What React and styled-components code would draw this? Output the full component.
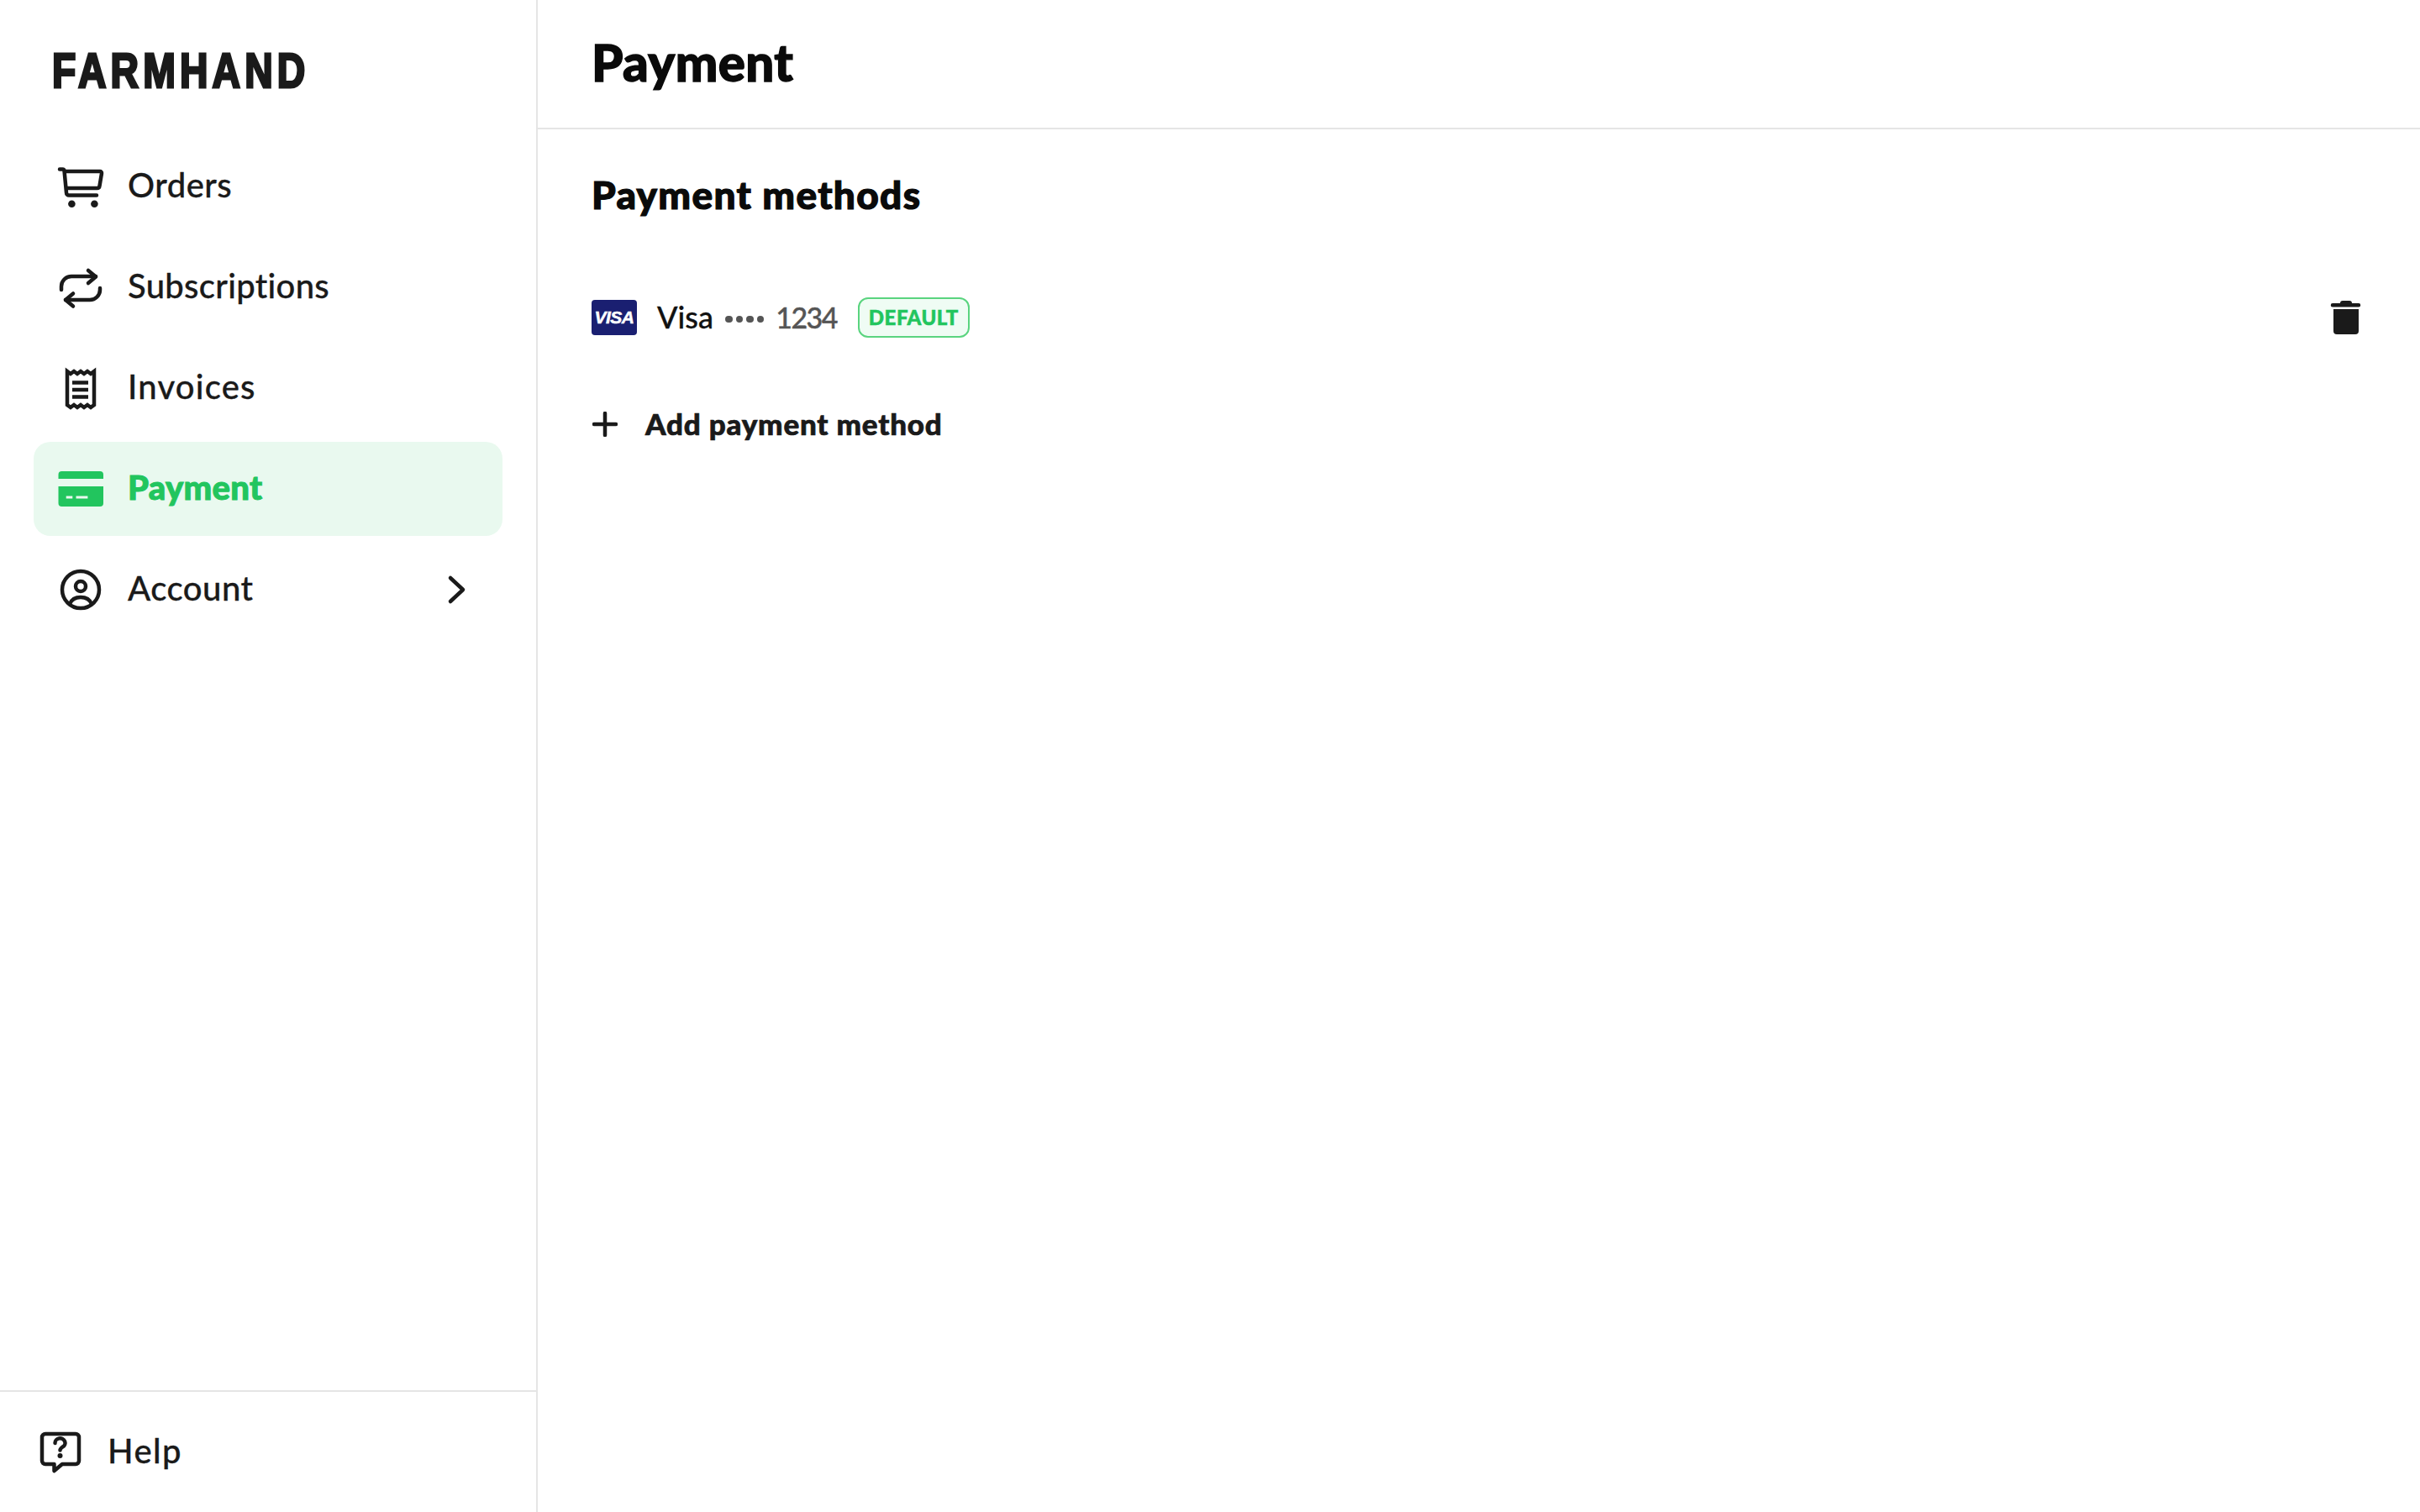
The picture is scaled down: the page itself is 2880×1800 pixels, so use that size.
import React from 'react';
import styled, { createGlobalStyle } from 'styled-components';

const GlobalStyle = createGlobalStyle`
  html, body {
    margin: 0;
    padding: 0;
    background: #fff;
  }
  body {
    font-family: Lato, "Open Sans", sans-serif;
    color: #1a1a1a;
  }
`;

const Layout = styled.div`
  display: grid;
  grid-template-columns: 640px 1fr;
  height: 1800px;
`;

const Sidebar = styled.aside`
  display: flex;
  flex-direction: column;
  border-right: 2px solid #e5e5e5;
  box-sizing: border-box;
`;

const LogoBar = styled.div`
  height: 166px;
  box-sizing: border-box;
  padding: 51px 0 0 62px;
`;

const Logo = styled.div`
  width: max-content;
  font-family: "Liberation Sans", sans-serif;
  font-weight: 700;
  font-size: 58px;
  line-height: 66px;
  letter-spacing: 6.4px;
  color: #1a1a1a;
  -webkit-text-stroke: 3px #1a1a1a;
  transform: scaleX(0.8);
  transform-origin: left center;
`;

const Nav = styled.nav`
  display: flex;
  flex-direction: column;
  gap: 8px;
  padding: 0 40px;
  flex: 1;
`;

const NavItem = styled.a`
  display: flex;
  align-items: center;
  height: 112px;
  padding: 0 28px;
  gap: 28px;
  border-radius: 20px;
  font-size: 40px;
  font-weight: ${(p) => (p.$active ? 900 : 500)};
  color: ${(p) => (p.$active ? '#22c55e' : '#1a1a1a')};
  background: ${(p) => (p.$active ? '#e9f9ef' : 'transparent')};
  -webkit-text-stroke: ${(p) => (p.$active ? '1px' : '0.3px')} currentColor;
`;

const NavLabel = styled.span`
  padding-bottom: 5px;
  letter-spacing: ${(p) => p.$track}px;
`;

const IconBox = styled.svg`
  width: 56px;
  height: 56px;
  flex: none;
  fill: none;
  stroke: currentColor;
  stroke-width: 4.5;
  stroke-linecap: round;
  stroke-linejoin: round;
`;

const Grow = styled.span`
  flex: 1;
`;

const Chevron = styled.svg`
  width: 24px;
  height: 36px;
  margin-right: 14px;
  fill: none;
  stroke: #1a1a1a;
  stroke-width: 4.5;
  stroke-linecap: round;
  stroke-linejoin: round;
`;

const HelpBar = styled.a`
  display: flex;
  align-items: center;
  gap: 28px;
  height: 145px;
  box-sizing: border-box;
  border-top: 2px solid #e5e5e5;
  padding-left: 44px;
  font-size: 40px;
  font-weight: 500;
  color: #1a1a1a;
  -webkit-text-stroke: 0.3px currentColor;
`;

const HelpLabel = styled.span`
  padding-bottom: 3px;
  letter-spacing: 1.4px;
`;

const Main = styled.main`
  display: flex;
  flex-direction: column;
`;

const Header = styled.header`
  height: 154px;
  box-sizing: border-box;
  border-bottom: 2px solid #e5e5e5;
  padding: 38px 64px 0;
`;

const Title = styled.h1`
  margin: 0;
  font-size: 60px;
  line-height: 72px;
  font-weight: 900;
  letter-spacing: 0.4px;
  color: #0a0a0a;
  -webkit-text-stroke: 1.4px #0a0a0a;
`;

const Section = styled.section`
  padding: 50px 0 0 64px;
`;

const SectionTitle = styled.h2`
  margin: 0;
  font-size: 46px;
  line-height: 56px;
  font-weight: 900;
  letter-spacing: 1.3px;
  color: #0a0a0a;
  -webkit-text-stroke: 1.2px #0a0a0a;
`;

const MethodRow = styled.div`
  display: flex;
  align-items: center;
  height: 64px;
  margin-top: 86px;
  padding-right: 60px;
`;

const CardLogo = styled.div`
  display: flex;
  align-items: center;
  justify-content: center;
  width: 54px;
  height: 42px;
  border-radius: 4px;
  background: #1a1f71;
  color: #fff;
  font-family: "Liberation Sans", sans-serif;
  font-size: 21px;
  font-weight: 700;
  font-style: italic;
  letter-spacing: -0.5px;
  -webkit-text-stroke: 0.5px #fff;
`;

const CardName = styled.span`
  margin-left: 24px;
  padding-bottom: 3px;
  font-size: 36px;
  font-weight: 500;
  color: #111;
  -webkit-text-stroke: 0.3px currentColor;
`;

const Dots = styled.span`
  display: flex;
  gap: 4px;
  margin-left: 14px;
  margin-top: 4px;
`;

const Dot = styled.i`
  width: 8.6px;
  height: 8.6px;
  border-radius: 50%;
  background: #555;
`;

const CardNumber = styled.span`
  margin-left: 14px;
  padding-bottom: 2px;
  font-size: 34px;
  font-weight: 500;
  letter-spacing: -1.6px;
  color: #555;
  -webkit-text-stroke: 0.4px currentColor;
`;

const Badge = styled.span`
  display: flex;
  align-items: center;
  justify-content: center;
  margin-left: 25px;
  width: 133px;
  height: 48px;
  padding-bottom: 2px;
  box-sizing: border-box;
  border: 2px solid #5ad47f;
  border-radius: 12px;
  background: #effcf4;
  color: #22c55e;
  font-size: 24px;
  font-weight: 900;
  letter-spacing: 0.5px;
  -webkit-text-stroke: 0.5px currentColor;
`;

const TrashIcon = styled.svg`
  width: 56px;
  height: 56px;
  flex: none;
  margin-left: auto;
  margin-right: 1px;
  fill: #1a1a1a;
`;

const AddRow = styled.a`
  display: flex;
  align-items: center;
  gap: 33px;
  height: 60px;
  margin-top: 64px;
  font-size: 35px;
  font-weight: 900;
  letter-spacing: 0.8px;
  color: #1a1a1a;
  -webkit-text-stroke: 0.7px currentColor;
`;

const PlusIcon = styled.svg`
  width: 30px;
  height: 30px;
  flex: none;
  margin: 1px 0 0 1px;
  fill: none;
  stroke: #1a1a1a;
  stroke-width: 4.5;
  stroke-linecap: round;
`;

const CartIcon = () => (
  <IconBox viewBox="0 0 56 56">
    <path d="M3 7.500h3.500a2 2 0 0 1 2 1.800L11 35.500a3 3 0 0 0 3 3h33" />
    <path d="M9 10h42a2 2 0 0 1 2 2.300l-2.500 15a3 3 0 0 1-3 2.700H12" />
    <circle cx="17.400" cy="48.700" r="4.300" fill="currentColor" stroke="none" />
    <circle cx="44.400" cy="48.700" r="4.300" fill="currentColor" stroke="none" />
  </IconBox>
);

const RepeatIcon = () => (
  <IconBox viewBox="0 0 56 56">
    <path d="M5 31v-4a12 12 0 0 1 12-12h29" />
    <path d="M37 8l9 7.500-9 7.500" />
    <path d="M51 29v2a12 12 0 0 1-12 12H10" />
    <path d="M19 35.500l-9 7.500 9 7.500" />
  </IconBox>
);

const ReceiptIcon = () => (
  <IconBox viewBox="0 0 56 56" style={{ strokeLinejoin: 'miter', strokeLinecap: 'butt' }}>
    <path d="M12 8v40l4 3 4-3 4 3 4-3 4 3 4-3 4 3 4-3V8l-4 3-4-3-4 3-4-3-4 3-4-3-4 3z" />
    <path d="M18 21.500h19M18 30h19M18 38.500h19" />
  </IconBox>
);

const CardIcon = () => (
  <IconBox viewBox="0 0 56 56" style={{ stroke: 'none' }}>
    <path fill="currentColor" d="M1.500 11a4 4 0 0 1 4-4h45.500a4 4 0 0 1 4 4v5H1.500z" />
    <path fill="currentColor" d="M1.500 25H55v20a4 4 0 0 1-4 4H5.500a4 4 0 0 1-4-4z" />
    <path style={{ stroke: '#e9f9ef', strokeWidth: 3, strokeLinecap: 'butt' }} d="M10.700 38h7.600M22.500 38h13.900" />
  </IconBox>
);

const UserIcon = () => (
  <IconBox viewBox="0 0 56 56">
    <circle cx="28" cy="28" r="22" />
    <circle cx="28" cy="24" r="6" />
    <path d="M15 45c2-5 7-8 13-8s11 3 13 8" />
  </IconBox>
);

const HelpIcon = () => (
  <IconBox viewBox="0 0 56 56">
    <path d="M10 6h36a4 4 0 0 1 4 4v28a4 4 0 0 1-4 4H30l-9.500 8v-8H10a4 4 0 0 1-4-4V10a4 4 0 0 1 4-4z" />
    <path d="M21.500 17a6 5.500 0 1 1 9 4.500c-2 1.500-3 2.500-3 4" />
    <circle cx="27.500" cy="32" r="3" fill="currentColor" stroke="none" />
  </IconBox>
);

const NAV = [
  { label: 'Orders', Icon: CartIcon, track: 0.5 },
  { label: 'Subscriptions', Icon: RepeatIcon, track: 0.3 },
  { label: 'Invoices', Icon: ReceiptIcon, track: 1.2 },
  { label: 'Payment', Icon: CardIcon, active: true, track: 0.3 },
  { label: 'Account', Icon: UserIcon, more: true, track: 0.5 },
];

export default function App() {
  return (
    <Layout>
      <GlobalStyle />
      <Sidebar>
        <LogoBar>
          <Logo>FARMHAND</Logo>
        </LogoBar>
        <Nav>
          {NAV.map(({ label, Icon, active, more, track }) => (
            <NavItem key={label} $active={active}>
              <Icon />
              <NavLabel $track={track}>{label}</NavLabel>
              {more && (
                <>
                  <Grow />
                  <Chevron viewBox="0 0 24 36">
                    <path d="M4 4l15 14L4 32" />
                  </Chevron>
                </>
              )}
            </NavItem>
          ))}
        </Nav>
        <HelpBar>
          <HelpIcon />
          <HelpLabel>Help</HelpLabel>
        </HelpBar>
      </Sidebar>
      <Main>
        <Header>
          <Title>Payment</Title>
        </Header>
        <Section>
          <SectionTitle>Payment methods</SectionTitle>
          <MethodRow>
            <CardLogo>VISA</CardLogo>
            <CardName>Visa</CardName>
            <Dots>
              <Dot />
              <Dot />
              <Dot />
              <Dot />
            </Dots>
            <CardNumber>1234</CardNumber>
            <Badge>DEFAULT</Badge>
            <TrashIcon viewBox="0 0 56 56">
              <path d="M22 11a3 3 0 0 1 3-3h8a3 3 0 0 1 3 3h8a2.200 2.200 0 0 1 0 4.500H13a2.200 2.200 0 0 1 0-4.500z" />
              <path d="M14 18h30v26a4 4 0 0 1-4 4H18a4 4 0 0 1-4-4z" />
            </TrashIcon>
          </MethodRow>
          <AddRow>
            <PlusIcon viewBox="0 0 30 30">
              <path d="M15 2v26M2 15h26" />
            </PlusIcon>
            Add payment method
          </AddRow>
        </Section>
      </Main>
    </Layout>
  );
}
